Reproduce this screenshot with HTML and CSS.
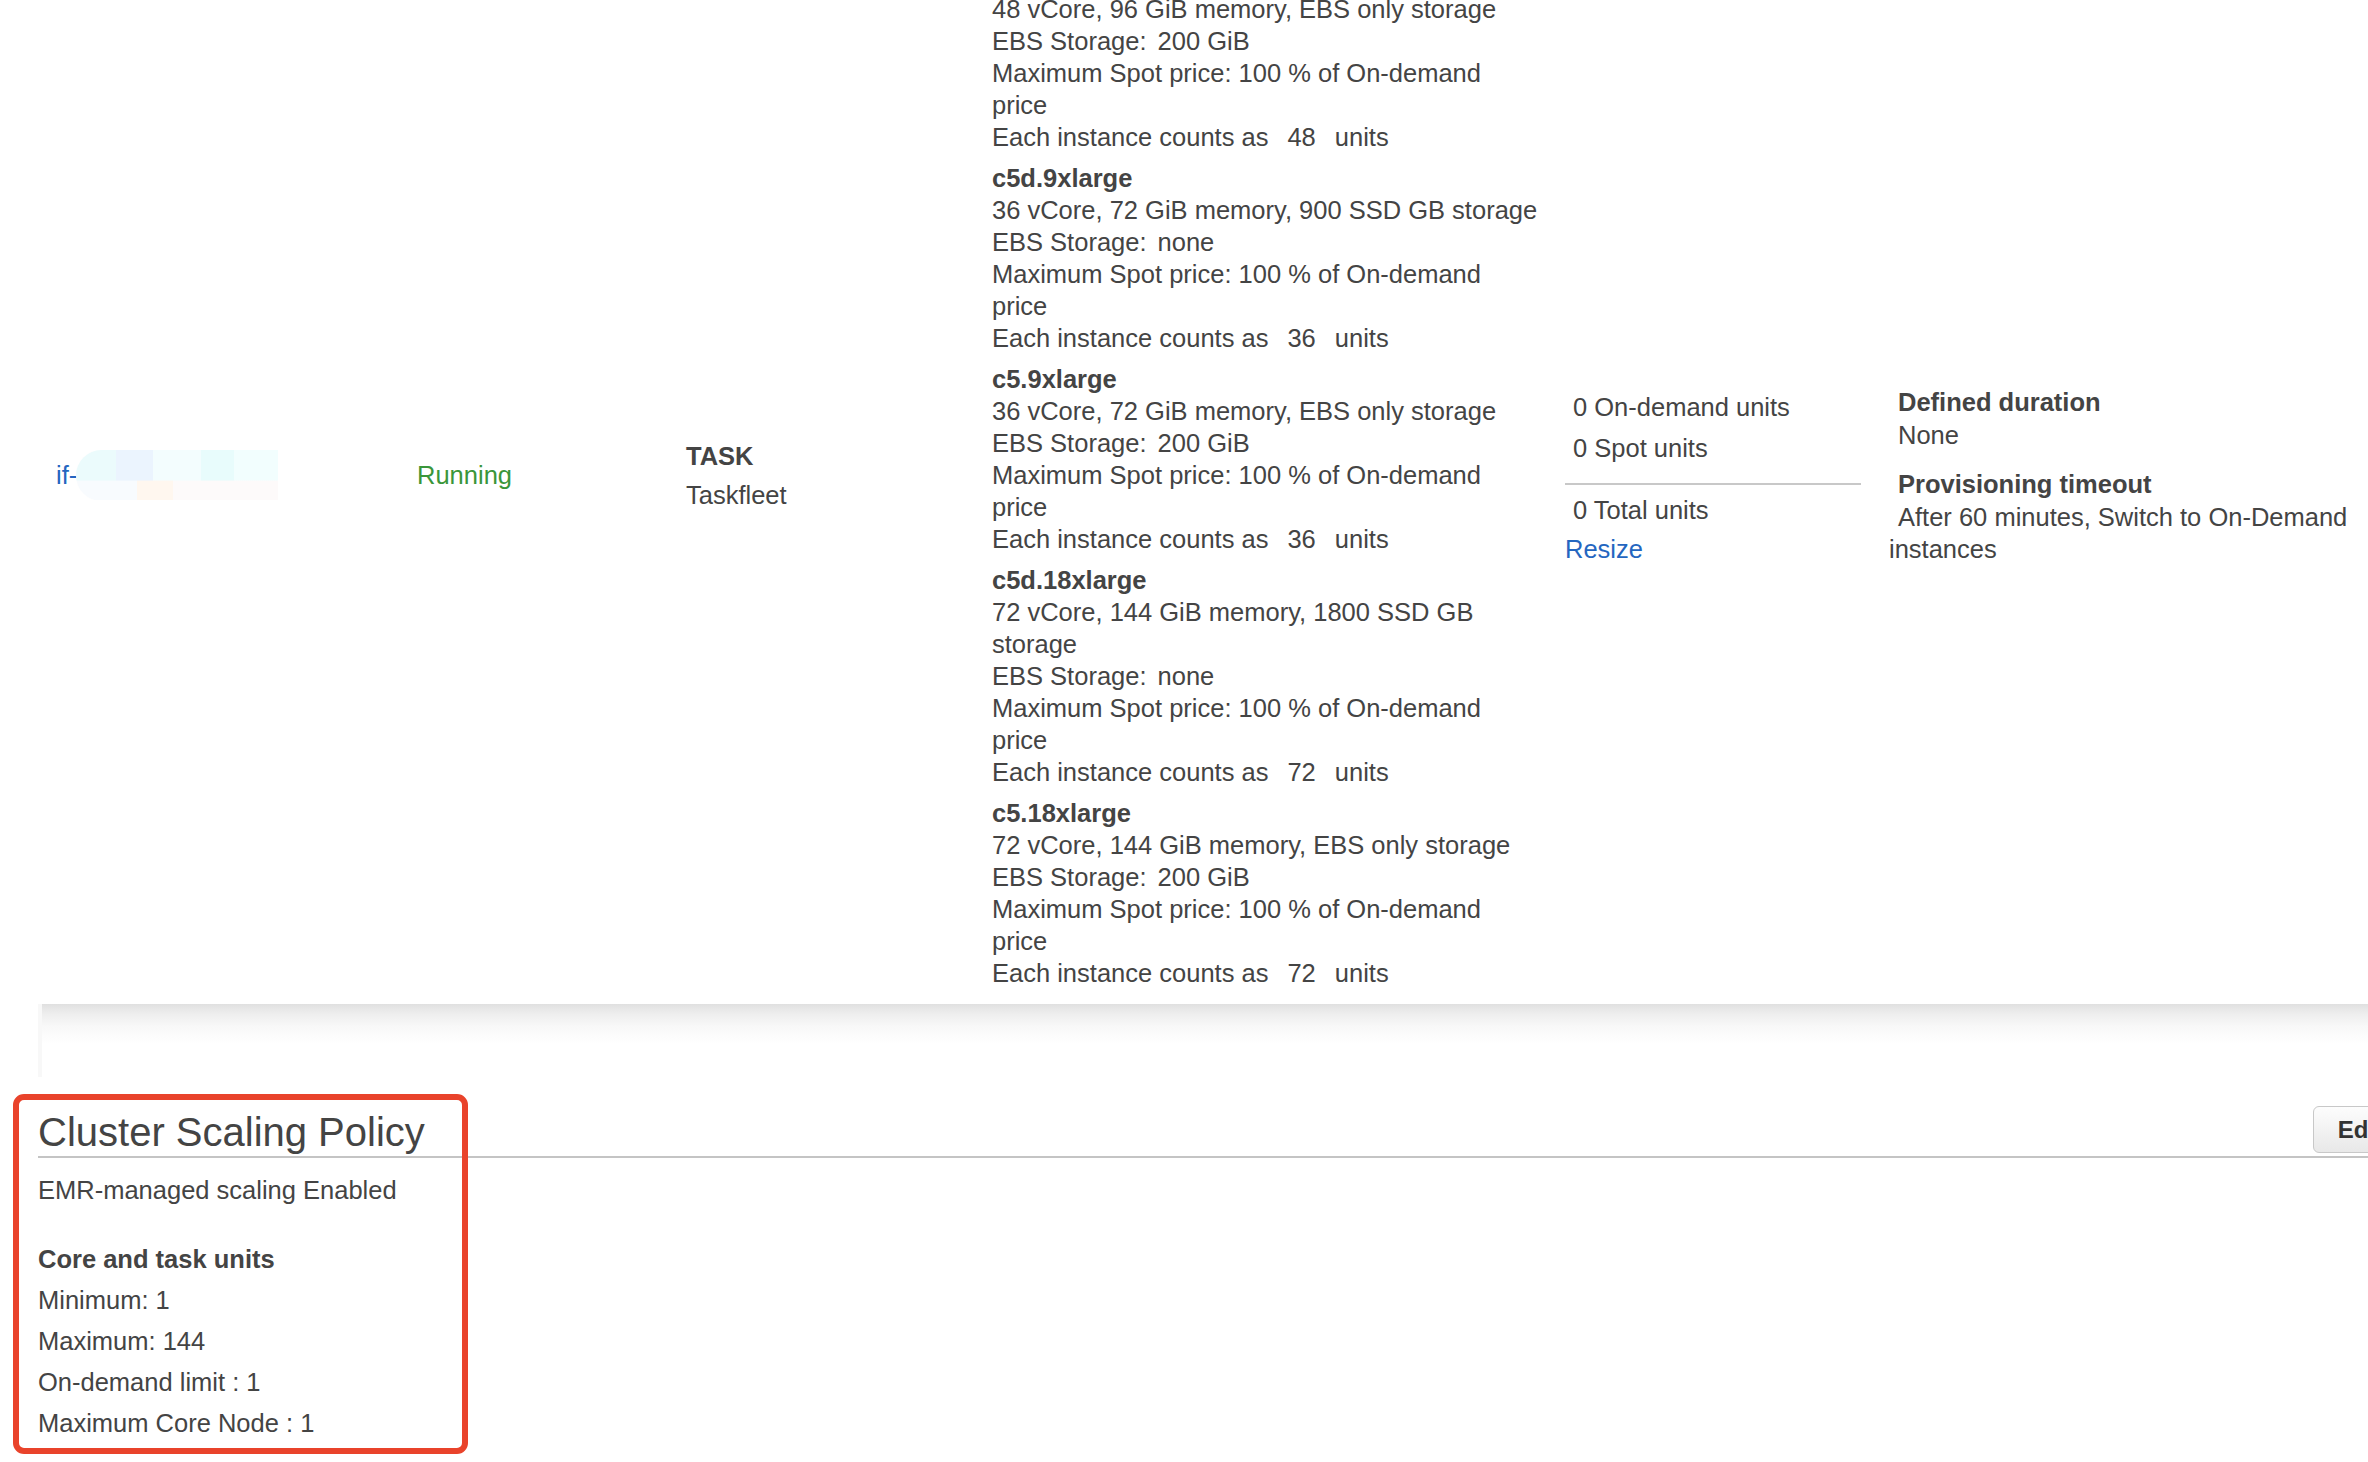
FILE: index.html
```html
<!DOCTYPE html>
<html lang="en">
<head>
<meta charset="utf-8">
<title>Instance fleets – Cluster Scaling Policy</title>
<link rel="stylesheet" href="styles.css">
</head>
<body>
<div class="page">
  <section class="fleet-panel">
    <div class="fleet-row">
      <div class="cell cell-id">
        <a class="link" href="#">if-</a><span class="redacted" aria-hidden="true"></span>
      </div>
      <div class="cell cell-status">Running</div>
      <div class="cell cell-node">
        <div class="node-type">TASK</div>
        <div class="node-name">Taskfleet</div>
      </div>
      <div class="cell cell-instances">
        <div class="instances">
          <div class="inst">
            <div class="inst-name">c5.12xlarge</div>
            <div>48 vCore, 96 GiB memory, EBS only storage</div>
            <div>EBS Storage:<span class="ebs">200 GiB</span></div>
            <div>Maximum Spot price: 100 % of On-demand price</div>
            <div>Each instance counts as<span class="num">48</span>units</div>
          </div>
          <div class="inst">
            <div class="inst-name">c5d.9xlarge</div>
            <div>36 vCore, 72 GiB memory, 900 SSD GB storage</div>
            <div>EBS Storage:<span class="ebs">none</span></div>
            <div>Maximum Spot price: 100 % of On-demand price</div>
            <div>Each instance counts as<span class="num">36</span>units</div>
          </div>
          <div class="inst">
            <div class="inst-name">c5.9xlarge</div>
            <div>36 vCore, 72 GiB memory, EBS only storage</div>
            <div>EBS Storage:<span class="ebs">200 GiB</span></div>
            <div>Maximum Spot price: 100 % of On-demand price</div>
            <div>Each instance counts as<span class="num">36</span>units</div>
          </div>
          <div class="inst">
            <div class="inst-name">c5d.18xlarge</div>
            <div>72 vCore, 144 GiB memory, 1800 SSD GB storage</div>
            <div>EBS Storage:<span class="ebs">none</span></div>
            <div>Maximum Spot price: 100 % of On-demand price</div>
            <div>Each instance counts as<span class="num">72</span>units</div>
          </div>
          <div class="inst">
            <div class="inst-name">c5.18xlarge</div>
            <div>72 vCore, 144 GiB memory, EBS only storage</div>
            <div>EBS Storage:<span class="ebs">200 GiB</span></div>
            <div>Maximum Spot price: 100 % of On-demand price</div>
            <div>Each instance counts as<span class="num">72</span>units</div>
          </div>
        </div>
      </div>
      <div class="cell cell-units">
        <div class="unit-line">0 On-demand units</div>
        <div class="unit-line unit-gap">0 Spot units</div>
        <hr class="unit-rule">
        <div class="unit-line">0 Total units</div>
        <a class="link resize" href="#">Resize</a>
      </div>
      <div class="cell cell-timeout">
        <div class="t-label">Defined duration</div>
        <div class="t-value">None</div>
        <div class="t-label t-gap">Provisioning timeout</div>
        <div class="t-value">After 60 minutes, Switch to On-Demand instances</div>
      </div>
    </div>
  </section>
  <div class="panel-shadow"></div>

  <section class="scaling">
    <div class="scaling-head">
      <h2 class="scaling-title">Cluster Scaling Policy</h2>
      <button class="btn-edit" type="button">Edit</button>
    </div>
    <div class="scaling-body">
      <p class="status-line">EMR-managed scaling Enabled</p>
      <p class="core-title">Core and task units</p>
      <p class="limit">Minimum: 1</p>
      <p class="limit">Maximum: 144</p>
      <p class="limit">On-demand limit : 1</p>
      <p class="limit">Maximum Core Node : 1</p>
    </div>
    <div class="annotation" aria-hidden="true"></div>
  </section>
</div>
</body>
</html>
```

FILE: styles.css
```css
html, body {
  margin: 0;
  padding: 0;
  background: #ffffff;
}

body {
  overflow: hidden;
  font-family: "Liberation Sans", Arial, Helvetica, sans-serif;
  font-size: 25.5px;
  line-height: 32px;
  color: #444444;
}

.page {
  width: 2420px;
}

/* ---------- instance fleet row ---------- */
.fleet-panel {
  margin: -54px 52px 0 38px;
  background: #ffffff;
}

.fleet-row {
  display: grid;
  grid-template-columns: 361px 269px 306px 573px 324px 1fr;
  align-items: center;
  padding: 15px 0;
}

.cell {
  padding: 0 18px;
}

.link {
  color: #2466c0;
  text-decoration: none;
}

.cell-id {
  display: flex;
  align-items: center;
}

.redacted {
  display: inline-block;
  width: 202px;
  height: 51px;
  margin-left: -1px;
  border-radius: 26px 0 0 26px;
  background:
    linear-gradient(90deg,
      #ebfbfc 0, #ebfbfc 20%,
      #ebf4fe 20%, #ebf4fe 38%,
      #f3fdfe 38%, #f3fdfe 62%,
      #e8fcfc 62%, #e8fcfc 78%,
      #f2fefe 78%, #f2fefe 100%) top / 100% 60% no-repeat,
    linear-gradient(90deg,
      #f8fbfe 0, #f8fbfe 30%,
      #fff7ef 30%, #fff7ef 48%,
      #fdfafa 48%, #fdfafa 100%) bottom / 100% 40% no-repeat;
}

.cell-status {
  color: #3a963a;
}

.node-type {
  font-weight: bold;
}

.node-name {
  margin-top: 7px;
}

.cell-instances {
  padding-right: 5px;
}

.instances {
  width: 549px;
}

.inst + .inst {
  margin-top: 9px;
}

.inst-name {
  font-weight: bold;
}

.ebs {
  margin-left: 11px;
}

.num {
  margin: 0 19px;
}

.cell-units {
  padding: 6px 10px 0 18px;
}

.unit-line {
  padding-left: 8px;
}

.unit-gap {
  margin-top: 9px;
}

.unit-rule {
  margin: 19px 0 9px;
  border: 0;
  height: 2px;
  background: #c8c8c8;
}

.resize {
  display: block;
  margin-top: 7px;
}

.cell-timeout {
  padding-right: 0;
}

.t-label,
.t-value {
  text-indent: 9px;
}

.t-label {
  font-weight: bold;
}

.t-value {
  margin-top: 1px;
}

.t-gap {
  margin-top: 17px;
}

/* shadow under the fleet table */
.panel-shadow {
  margin-left: 38px;
  height: 73px;
  border-left: 4px solid #f8f8f8;
  background: linear-gradient(#e0e0e0 0, #eeeeee 10px, #f8f8f8 22px, #ffffff 40px);
}

/* ---------- cluster scaling policy ---------- */
.scaling {
  position: relative;
  padding: 29px 12px 20px 38px;
}

.scaling-head {
  display: flex;
  justify-content: space-between;
  align-items: flex-end;
  border-bottom: 2px solid #c4c4c4;
}

.scaling-title {
  margin: 0;
  font-size: 40px;
  line-height: 48px;
  font-weight: normal;
  color: #444444;
}

.btn-edit {
  height: 47px;
  margin-bottom: 3px;
  padding: 0 24px;
  border: 1px solid #c8c8c8;
  border-radius: 6px;
  background: linear-gradient(#fdfdfd, #e8e8e8);
  font-family: "Liberation Sans", Arial, Helvetica, sans-serif;
  font-size: 24px;
  font-weight: bold;
  color: #333333;
}

.scaling-body p {
  margin: 9px 0 0;
}

.scaling-body .status-line {
  margin-top: 16px;
}

.scaling-body .core-title {
  margin-top: 37px;
  font-weight: bold;
}

.scaling-body .limit:first-of-type {
  margin-top: 10px;
}

/* red annotation frame drawn over the section */
.annotation {
  position: absolute;
  left: 13px;
  top: 17px;
  width: 455px;
  height: 360px;
  box-sizing: border-box;
  border: 6px solid #e9432b;
  border-radius: 11px;
  pointer-events: none;
}
```
